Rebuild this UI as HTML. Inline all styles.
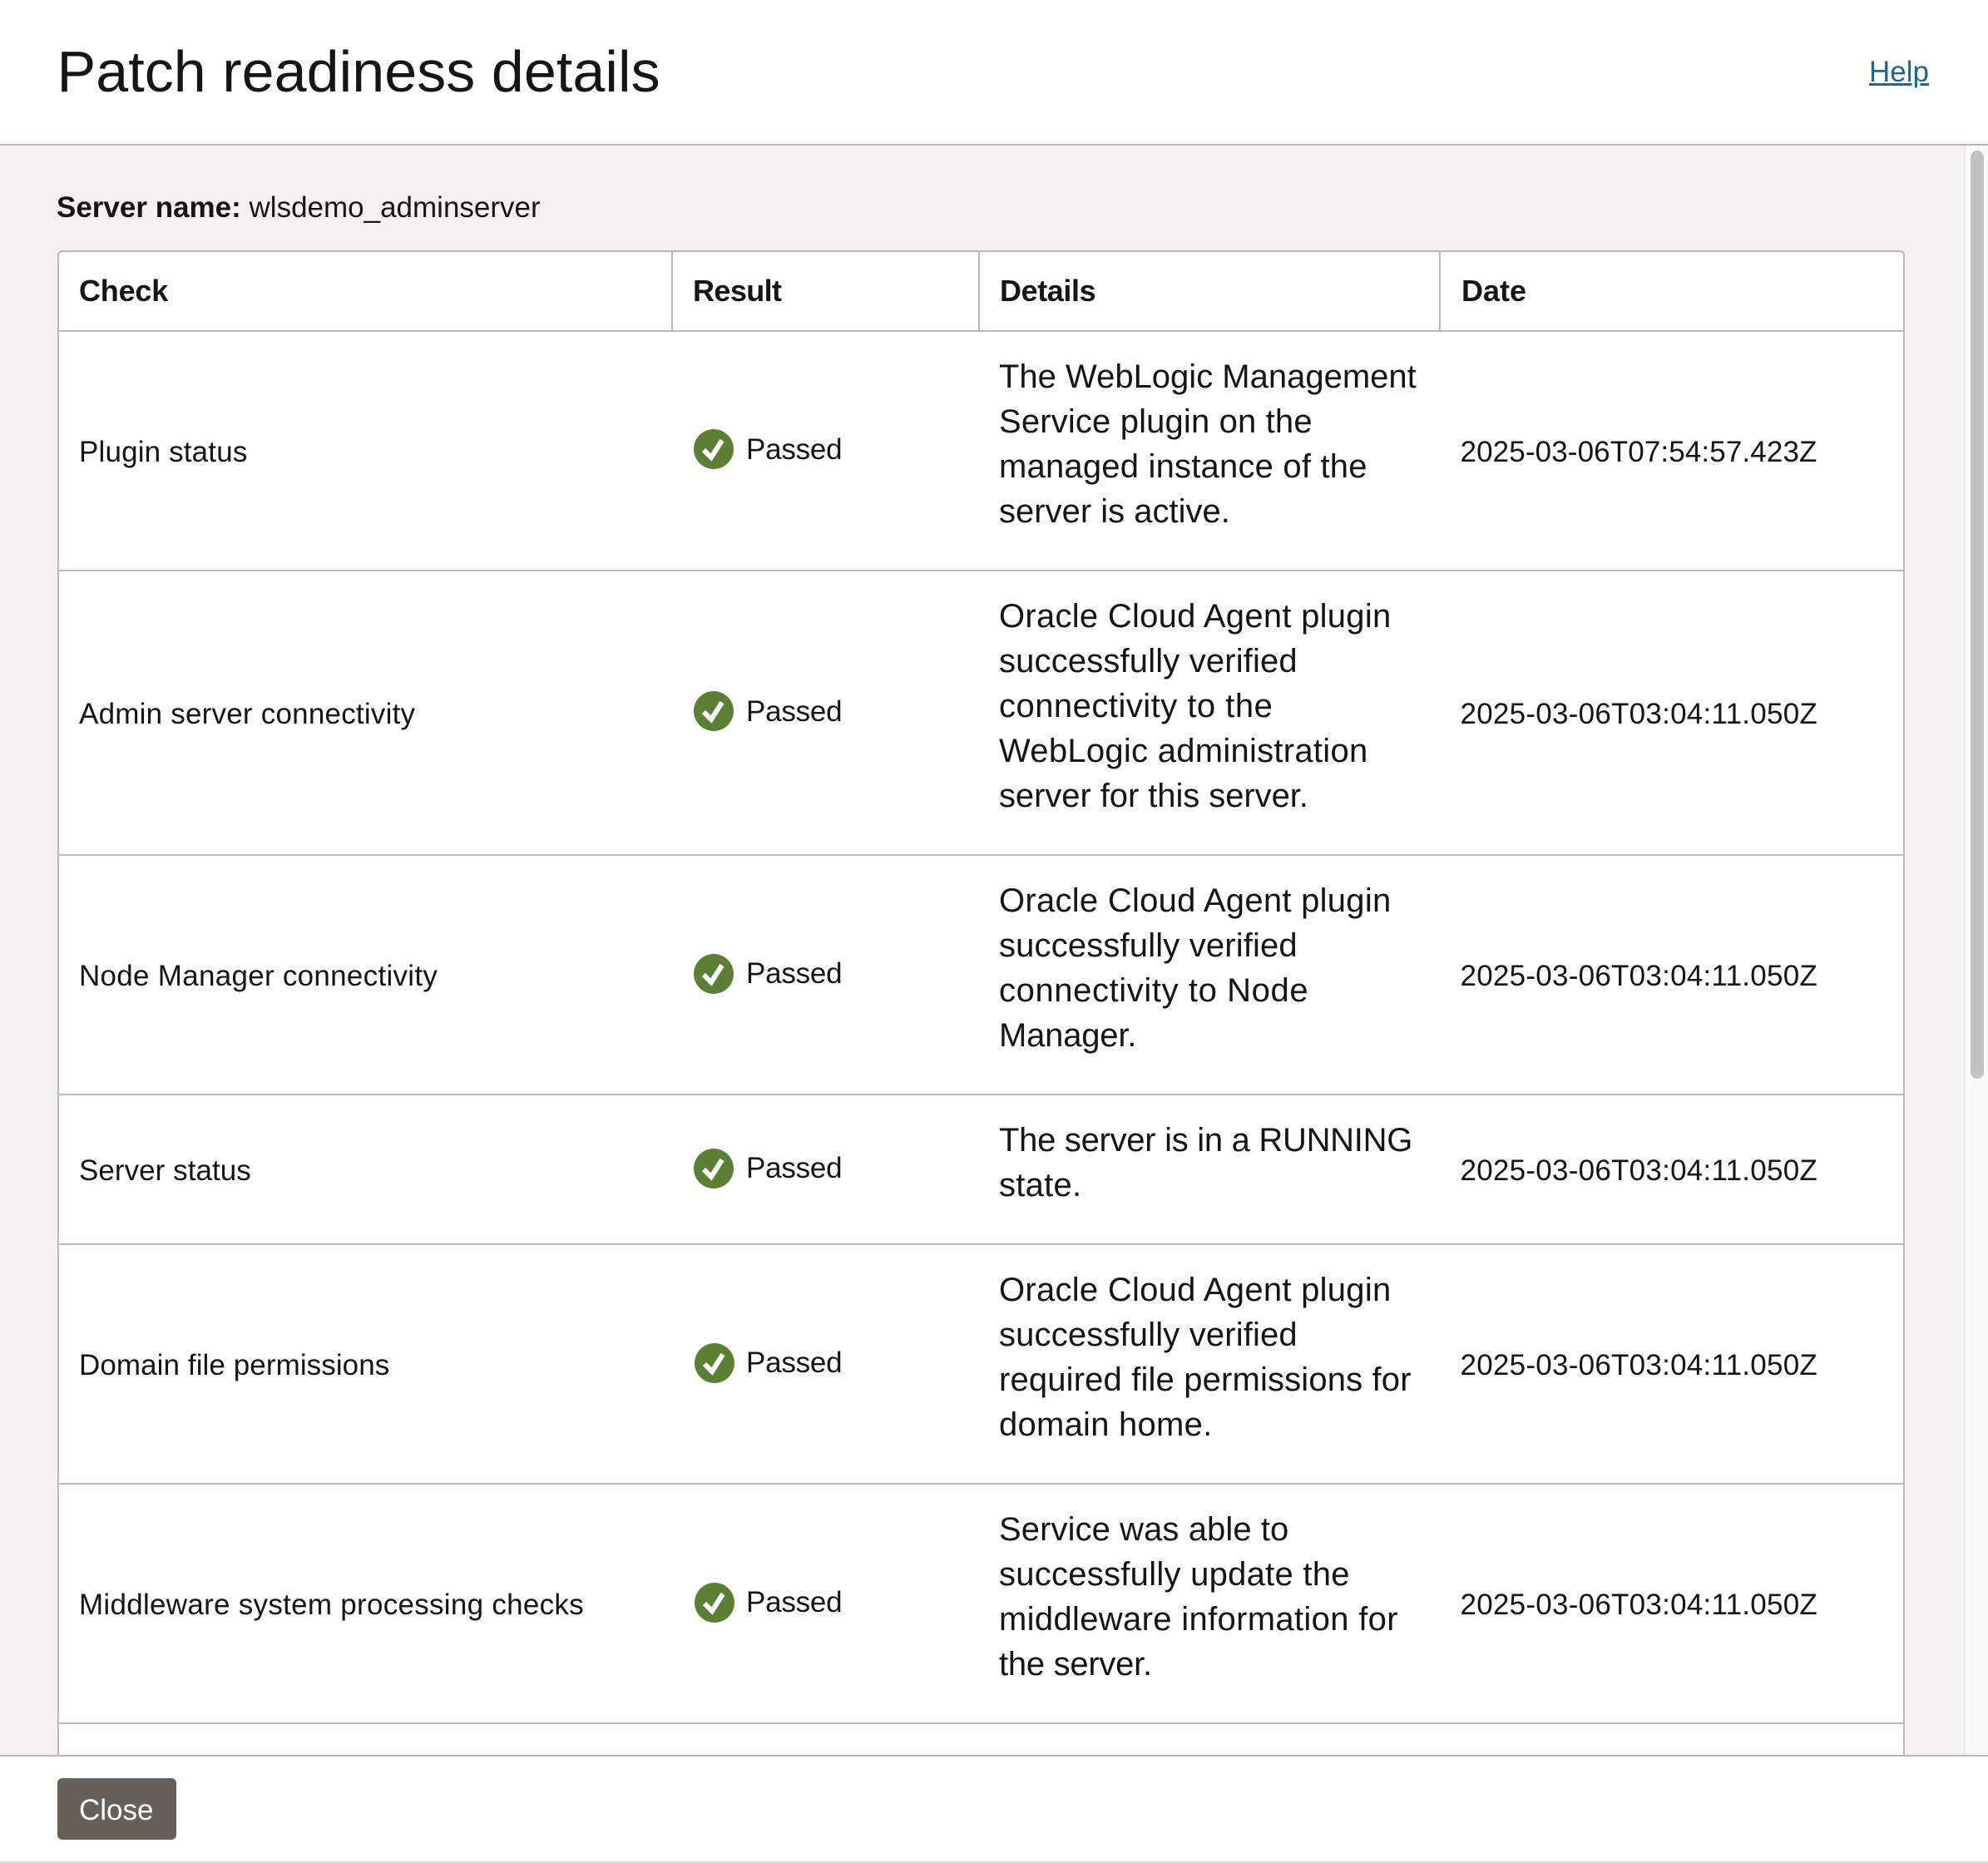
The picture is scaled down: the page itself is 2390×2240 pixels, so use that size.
<!DOCTYPE html>
<html><head><meta charset="utf-8"><title>Patch readiness details</title>
<style>
html,body{margin:0;padding:0;background:#fefefc}
#p{position:relative;width:2390px;height:2240px;overflow:hidden;background:#fefefc;font-family:"Liberation Sans",sans-serif;color:#161513}
#p div,#p a{position:absolute}
.t{white-space:nowrap;font-size:35px;line-height:40px}
.b{font-weight:700}
.th{font-size:36px;font-weight:700;top:330px;white-space:nowrap;line-height:40px}
.d{left:1201px;font-size:40px;line-height:54px;white-space:nowrap}
.l{left:95px;letter-spacing:.28px}.r{left:897px;letter-spacing:-.22px}.dt{left:1755.5px;letter-spacing:.25px}
.h{background:#bcb7b1;height:2px;left:70px;width:2218px}
.v{background:#bcb7b1;width:2px;top:302px;height:96px}
svg{position:absolute;left:834px;width:48px;height:48px}
</style></head><body><div id="p">
<div style="left:0;top:0;width:2390px;height:174px;background:#fefefc"></div>
<div style="left:0;top:175px;width:2361px;height:1936px;background:#f3f2f1"></div>
<div style="left:2361px;top:175px;width:29px;height:1936px;background:#fafafa;border-left:2px solid #e8e8e8;box-sizing:border-box"></div>
<div style="left:2369px;top:181px;width:16px;height:1116px;border-radius:8px;background:#c2c2c2"></div>
<div style="left:0;top:173px;width:2390px;height:2px;background:#bcb7b1"></div>
<div class="t" style="left:68.5px;top:46px;font-size:70px;line-height:80px;letter-spacing:.06px">Patch readiness details</div>
<a class="t" style="left:2247px;top:67px;color:#2a6485;text-decoration:underline">Help</a>
<div class="t" style="left:68px;top:229.5px"><span class="b">Server name:</span> wlsdemo_adminserver</div>

<div style="left:69px;top:301px;width:2221px;height:1815px;background:#fefefc;border:2px solid #bcb7b1;border-bottom:0;border-radius:6px 6px 0 0;box-sizing:border-box"></div>
<div class="v" style="left:807px"></div><div class="v" style="left:1176px"></div><div class="v" style="left:1730px"></div>
<div class="h" style="top:397px"></div>
<div class="h" style="top:685px"></div>
<div class="h" style="top:1027px"></div>
<div class="h" style="top:1315px"></div>
<div class="h" style="top:1495px"></div>
<div class="h" style="top:1783px"></div>
<div class="h" style="top:2071px"></div>

<div class="th" style="left:95px;letter-spacing:-.2px">Check</div>
<div class="th" style="left:833px;letter-spacing:-.6px">Result</div>
<div class="th" style="left:1202px;letter-spacing:-.4px">Details</div>
<div class="th" style="left:1757px">Date</div>

<div class="t l" style="top:523.5px;letter-spacing:.16px">Plugin status</div>
<svg style="top:516px" viewBox="0 0 48 48"><circle cx="24" cy="24" r="24" fill="#5a7f35"/><path d="M12 25l9 9L34 13.500" fill="none" stroke="#fff" stroke-width="6"/></svg>
<div class="t r" style="top:520.5px">Passed</div>
<div class="d" style="top:425.5px">The WebLogic Management<br><span style="letter-spacing:.15px">Service plugin on the</span><br><span style="letter-spacing:.2px">managed instance of the</span><br>server is active.</div>
<div class="t dt" style="top:523.5px;letter-spacing:.12px">2025-03-06T07:54:57.423Z</div>

<div class="t l" style="top:838.5px;letter-spacing:.22px">Admin server connectivity</div>
<svg style="top:830.500px" viewBox="0 0 48 48"><circle cx="24" cy="24" r="24" fill="#5a7f35"/><path d="M12 25l9 9L34 13.500" fill="none" stroke="#fff" stroke-width="6"/></svg>
<div class="t r" style="top:835.5px">Passed</div>
<div class="d" style="top:714px"><span style="letter-spacing:.27px">Oracle Cloud Agent plugin</span><br><span style="letter-spacing:.15px">successfully verified</span><br><span style="letter-spacing:.48px">connectivity to the</span><br><span style="letter-spacing:.27px">WebLogic administration</span><br><span style="letter-spacing:-.07px">server for this server.</span></div>
<div class="t dt" style="top:838.5px">2025-03-06T03:04:11.050Z</div>

<div class="t l" style="top:1153.5px">Node Manager connectivity</div>
<svg style="top:1146.500px" viewBox="0 0 48 48"><circle cx="24" cy="24" r="24" fill="#5a7f35"/><path d="M12 25l9 9L34 13.500" fill="none" stroke="#fff" stroke-width="6"/></svg>
<div class="t r" style="top:1150.5px">Passed</div>
<div class="d" style="top:1056px"><span style="letter-spacing:.27px">Oracle Cloud Agent plugin</span><br><span style="letter-spacing:.15px">successfully verified</span><br><span style="letter-spacing:.6px">connectivity to Node</span><br><span style="letter-spacing:-.2px">Manager.</span></div>
<div class="t dt" style="top:1153.5px">2025-03-06T03:04:11.050Z</div>

<div class="t l" style="top:1387.5px;letter-spacing:.05px">Server status</div>
<svg style="top:1380.500px" viewBox="0 0 48 48"><circle cx="24" cy="24" r="24" fill="#5a7f35"/><path d="M12 25l9 9L34 13.500" fill="none" stroke="#fff" stroke-width="6"/></svg>
<div class="t r" style="top:1384.5px">Passed</div>
<div class="d" style="top:1344px"><span style="letter-spacing:-.29px">The server is in a RUNNING</span><br><span style="letter-spacing:.25px">state.</span></div>
<div class="t dt" style="top:1387.5px">2025-03-06T03:04:11.050Z</div>

<div class="t l" style="top:1621.5px;letter-spacing:.08px">Domain file permissions</div>
<svg style="top:1614.500px;left:835px" viewBox="0 0 48 48"><circle cx="24" cy="24" r="24" fill="#5a7f35"/><path d="M12 25l9 9L34 13.500" fill="none" stroke="#fff" stroke-width="6"/></svg>
<div class="t r" style="top:1618.5px">Passed</div>
<div class="d" style="top:1524px"><span style="letter-spacing:.27px">Oracle Cloud Agent plugin</span><br><span style="letter-spacing:.15px">successfully verified</span><br><span style="letter-spacing:.15px">required file permissions for</span><br><span style="letter-spacing:.25px">domain home.</span></div>
<div class="t dt" style="top:1621.5px">2025-03-06T03:04:11.050Z</div>

<div class="t l" style="top:1909.5px">Middleware system processing checks</div>
<svg style="top:1902.500px;left:835px" viewBox="0 0 48 48"><circle cx="24" cy="24" r="24" fill="#5a7f35"/><path d="M12 25l9 9L34 13.500" fill="none" stroke="#fff" stroke-width="6"/></svg>
<div class="t r" style="top:1906.5px">Passed</div>
<div class="d" style="top:1812px"><span style="letter-spacing:.08px">Service was able to</span><br><span style="letter-spacing:.26px">successfully update the</span><br><span style="letter-spacing:.33px">middleware information for</span><br><span style="letter-spacing:-.27px">the server.</span></div>
<div class="t dt" style="top:1909.5px">2025-03-06T03:04:11.050Z</div>

<div style="left:0;top:2110px;width:2390px;height:130px;background:#fefefc"></div>
<div style="left:0;top:2110px;width:2390px;height:2px;background:#bcb7b1"></div>
<div style="left:0;top:2238px;width:2390px;height:2px;background:#dcdcdc"></div>
<div style="left:69px;top:2138px;width:143px;height:74px;background:#665f5a;border-radius:6px"></div>
<div class="t" style="left:95px;top:2156.5px;color:#fff">Close</div>
</div></body></html>
